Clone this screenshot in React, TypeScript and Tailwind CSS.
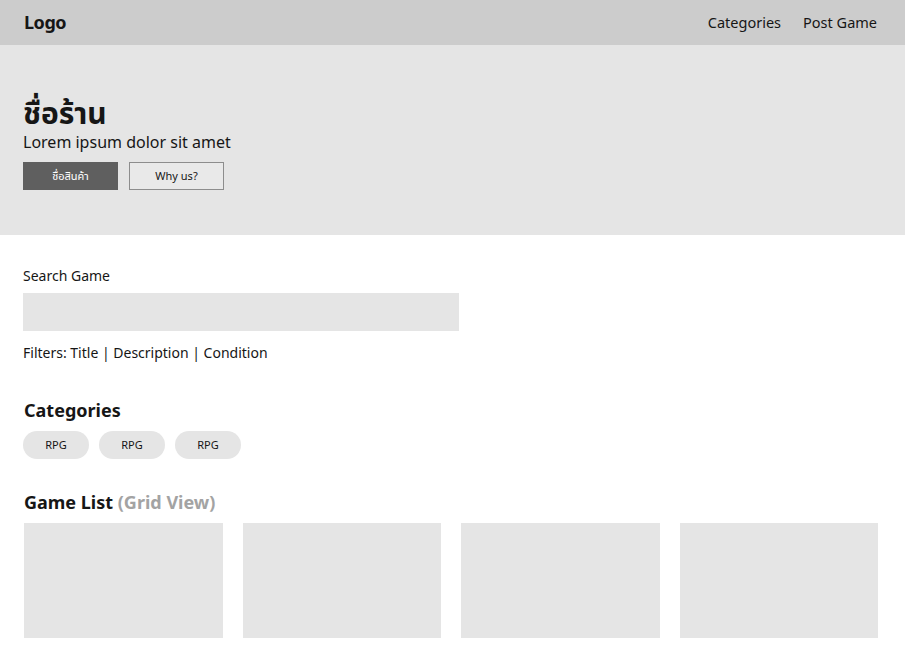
import React from "react";

export default function App() {
  return (
    <div className="min-h-[667px] bg-white text-[#161616] font-['Noto_Sans','Noto_Sans_Thai',Roboto,sans-serif]">
      <header className="h-[45px] bg-[#cccccc] flex items-center justify-between pl-6 pr-[28px]">
        <div className="text-[18px] font-bold tracking-tight">Logo</div>
        <nav className="flex items-center gap-[22px] text-[14.5px]">
          <span>Categories</span>
          <span>Post Game</span>
        </nav>
      </header>

      <section className="h-[190px] bg-[#e5e5e5] pl-[23px] pt-[50px]">
        <h1 className="text-[30px] leading-[36px] font-bold">ชื่อร้าน</h1>
        <p className="text-[16px] leading-[22px]">Lorem ipsum dolor sit amet</p>
        <div className="flex gap-[11px] mt-[9px]">
          <button className="w-[95px] h-[28px] bg-[#5f5f5f] text-white text-[11px] border border-[#5f5f5f]">ชื่อสินค้า</button>
          <button className="w-[95px] h-[28px] bg-[#e9e9e9] text-[#161616] text-[11px] border border-[#8d8d8d]">Why us?</button>
        </div>
      </section>

      <section className="pl-[23px] pr-[27px] pt-[31px]">
        <div className="text-[14px] leading-[20px]">Search Game</div>
        <div className="mt-[7px] w-[436px] h-[38px] bg-[#e5e5e5]"></div>
        <div className="mt-[12px] text-[14px] leading-[20px]">Filters: Title | Description | Condition</div>

        <h2 className="mt-[35px] pl-px text-[18px] leading-[24px] font-bold">Categories</h2>
        <div className="mt-[9px] flex gap-[10px]">
          {[0, 1, 2].map((i) => (
            <div key={i} className="w-[66px] h-[28px] rounded-full bg-[#e5e5e5] flex items-center justify-center text-[11px]">RPG</div>
          ))}
        </div>

        <h2 className="mt-[31px] pl-px text-[18px] leading-[24px] font-bold">
          Game List <span className="text-[#a3a3a3]">(Grid View)</span>
        </h2>
        <div className="mt-[9px] pl-px grid grid-cols-4 gap-x-5">
          {[0, 1, 2, 3].map((i) => (
            <div key={i} className="h-[115px] bg-[#e5e5e5]"></div>
          ))}
        </div>
      </section>
    </div>
  );
}
